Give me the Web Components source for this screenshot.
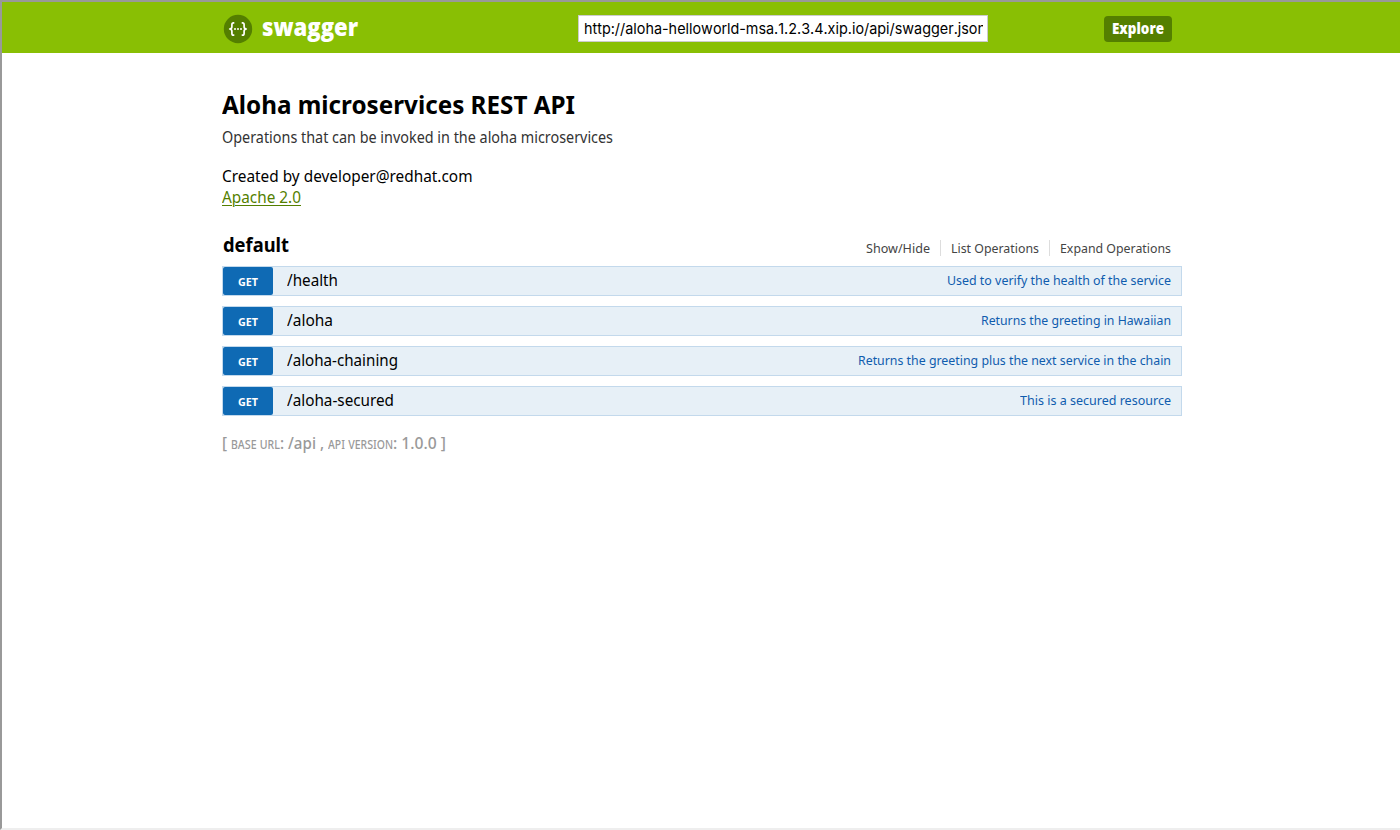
<!DOCTYPE html>
<html lang="en">
<head>
<meta charset="utf-8">
<title>Swagger UI</title>
<style>
html,body{margin:0;height:100%;background:#fff}
body{font-family:"Noto Sans","Open Sans",sans-serif;color:#000}
</style>
</head>
<body>
<swagger-page></swagger-page>
<script>
const define = (name, html, setup) => {
  const t = document.createElement('template');
  t.innerHTML = html;
  customElements.define(name, class extends HTMLElement {
    connectedCallback() {
      if (this.shadowRoot) return;
      this.attachShadow({mode: 'open'}).append(t.content.cloneNode(true));
      if (setup) setup(this, this.shadowRoot);
    }
  });
};

// Text condensed horizontally to the width given in "w".
define('fit-text', `<style>
:host{display:inline-block;white-space:pre;vertical-align:top}
span{display:inline-block;transform-origin:0 0;vertical-align:top}
</style><span><slot></slot></span>`, (el, root) => {
  const s = root.querySelector('span'), w = parseFloat(el.getAttribute('w'));
  const natural = s.getBoundingClientRect().width;
  s.style.transform = 'scaleX(' + w / natural + ')';
  s.style.marginRight = (w - natural) + 'px';
  el.style.width = w + 'px';
});

define('swagger-logo', `<style>
:host{display:flex;align-items:center;width:355px;height:30px;padding-left:1px;color:#fff;font:800 24px/30px "Open Sans","Noto Sans",sans-serif}
svg{display:block;width:30px;height:30px;margin-right:9px;margin-top:-2px}
fit-text{margin-top:-6px}
</style>
<svg viewBox="0 0 30 30"><circle cx="15" cy="15" r="14.2" fill="#547f00"/>
<g fill="none" stroke="#fff" stroke-width="1.7" stroke-linejoin="round"><path d="M11.3 8.9h-.8q-1.6 0-1.6 1.7v2.2q0 2-2.2 2.2q2.2.2 2.2 2.2v2.3q0 1.7 1.6 1.7h.8M18.7 8.9h.8q1.6 0 1.6 1.7v2.2q0 2 2.2 2.2q-2.2.2-2.2 2.2v2.3q0 1.7-1.6 1.7h-.8"/></g>
<g fill="#fff"><circle cx="12" cy="15" r="1"/><circle cx="15" cy="15" r="1"/><circle cx="18" cy="15" r="1"/></g></svg>
<fit-text w="96">swagger</fit-text>`);

define('url-field', `<style>
:host{display:block;box-sizing:border-box;width:410px;height:27px;border:1px solid #ccc;background:#fff;padding:0 4px 0 5px}
div{overflow:hidden;font:15px/25px Inter,sans-serif;font-feature-settings:"calt" 0;font-kerning:none;height:25px}
</style><div><fit-text w="402"><slot></slot></fit-text></div>`);

define('explore-button', `<style>
:host{display:block;box-sizing:border-box;width:68px;height:26px;margin-left:116px;margin-top:1px;padding-left:8px;border-radius:4px;background:#547f00;color:#fff;font:800 15px/25px "Open Sans",sans-serif}
</style><fit-text w="52"><slot></slot></fit-text>`);

define('top-bar', `<style>
:host{display:block;height:51px;background:#89bf04}
div{width:960px;margin-left:220px;padding-top:13px;display:flex;align-items:flex-start}
</style><div><swagger-logo></swagger-logo><url-field>http://aloha-helloworld-msa.1.2.3.4.xip.io/api/swagger.json</url-field><explore-button>Explore</explore-button></div>`);

define('api-info', `<style>
:host{display:flex;flex-direction:column;height:177px;box-sizing:border-box;padding-top:33px}
.t{font:700 25.5px/36px "Noto Sans",sans-serif}
.d{font-size:15.4px;line-height:20px;color:#333;margin-top:6px}
.c{font-size:16.4px;line-height:21px;margin-top:17px}
.l{font-size:16.4px;line-height:21px;color:#547f00}
a{color:inherit;text-decoration:underline;text-decoration-thickness:1px;text-underline-offset:2px}
</style>
<div class="t"><fit-text w="353">Aloha microservices REST API</fit-text></div>
<div class="d"><fit-text w="391">Operations that can be invoked in the aloha microservices</fit-text></div>
<div class="c"><fit-text w="250.5">Created by developer@redhat.com</fit-text></div>
<div class="l"><fit-text w="79"><a>Apache 2.0</a></fit-text></div>`);

define('resource-heading', `<style>
:host{display:flex;justify-content:space-between;height:36px;padding:0 11px 0 1px}
.n{font-size:19.5px;font-weight:700;line-height:30px}
nav{display:flex;align-items:flex-start;margin-top:10px;font-size:13.4px;line-height:16px;color:#444}
nav fit-text+fit-text{border-left:1px solid #ddd;padding-left:10px;margin-left:10px}
</style><fit-text class="n" w="66">default</fit-text>
<nav><fit-text w="64">Show/Hide</fit-text><fit-text w="88">List Operations</fit-text><fit-text w="111">Expand Operations</fit-text></nav>`);

define('operation-row', `<style>
:host{display:flex;box-sizing:border-box;height:30px;margin-bottom:10px;border:1px solid #c3d9ec;background:#e7f0f7;padding-right:10px}
.m{width:50px;height:28px;border-radius:2px;background:#0f6ab4;color:#fff;text-align:center;font-size:11.4px;font-weight:700;line-height:29px}
.p{margin-left:14px;font-size:16.4px;line-height:25px}
.s{margin-left:auto;font-size:13.4px;line-height:27px;color:#0f5cae}
</style><div class="m"><fit-text w="20">GET</fit-text></div><div class="p"></div><div class="s"></div>`, (el, root) => {
  for (const k of ['p', 's']) {
    const f = document.createElement('fit-text');
    f.setAttribute('w', el.getAttribute(k + 'w'));
    f.textContent = el.getAttribute(k === 'p' ? 'path' : 'summary');
    root.querySelector('.' + k).append(f);
  }
});

define('api-footer', `<style>
:host{display:flex;padding-top:6px;font-size:16.4px;line-height:22px;color:#999;font-weight:500}
.sc{font-variant:small-caps;font-weight:400}
</style><fit-text w="9">[ </fit-text><fit-text class="sc" w="49">base url</fit-text><fit-text w="48">: /api , </fit-text><fit-text class="sc" w="65">api version</fit-text><fit-text w="53">: 1.0.0 ]</fit-text>`);

define('swagger-page', `<style>
:host{display:block;box-sizing:border-box;height:830px;border-top:2px solid #999;border-left:2px solid #999;border-bottom:2px solid #eee;overflow:hidden}
main{width:960px;margin-left:220px}
</style><top-bar></top-bar><main><api-info></api-info><resource-heading></resource-heading>
<operation-row path="/health" pw="51" summary="Used to verify the health of the service" sw="224"></operation-row>
<operation-row path="/aloha" pw="46" summary="Returns the greeting in Hawaiian" sw="190"></operation-row>
<operation-row path="/aloha-chaining" pw="111" summary="Returns the greeting plus the next service in the chain" sw="313"></operation-row>
<operation-row path="/aloha-secured" pw="107" summary="This is a secured resource" sw="151"></operation-row>
<api-footer></api-footer></main>`);
</script>
</body>
</html>
